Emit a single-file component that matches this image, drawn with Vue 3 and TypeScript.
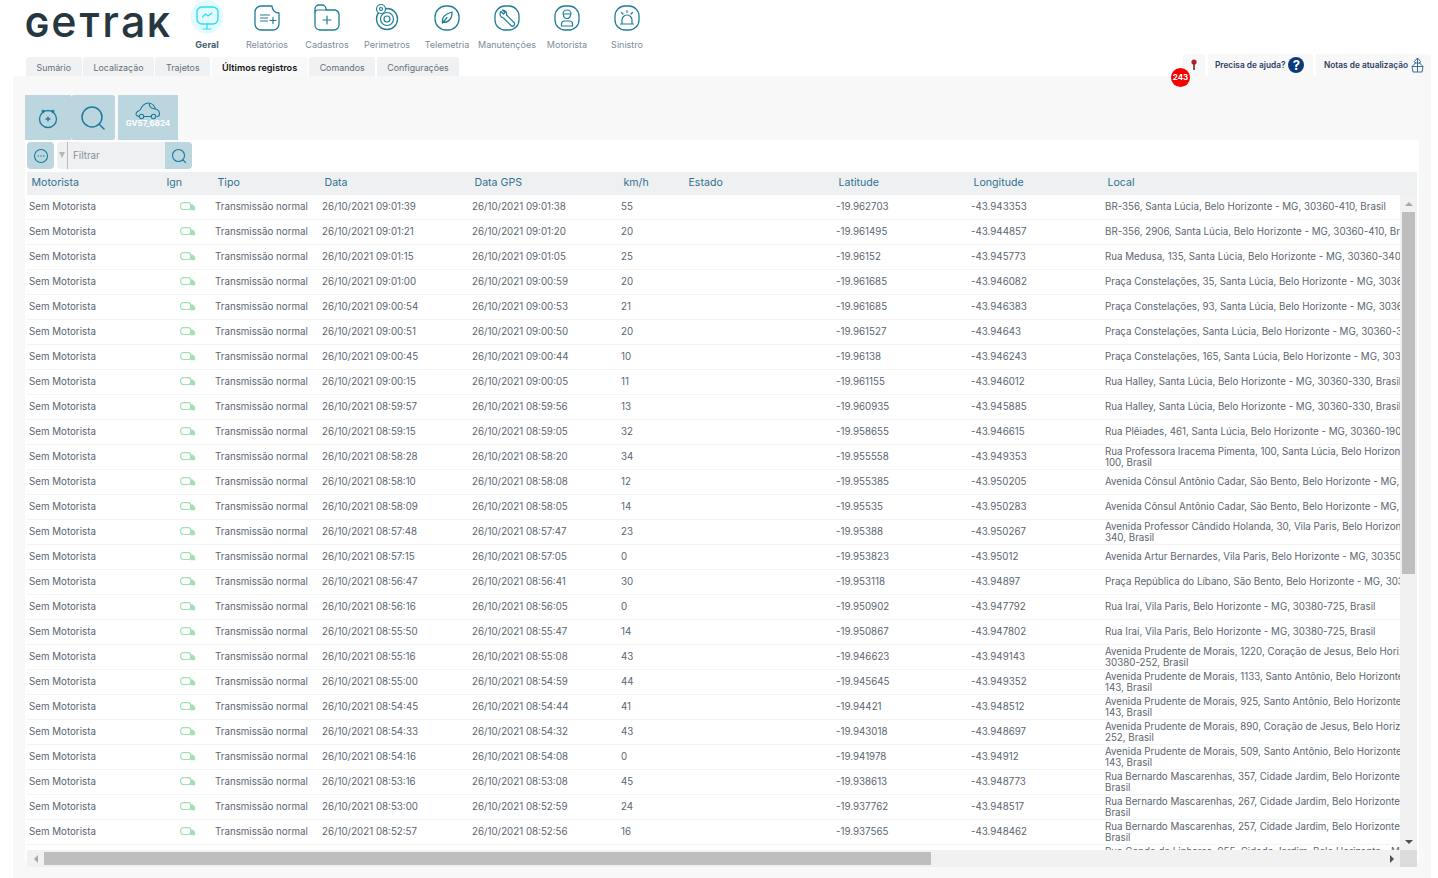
<script setup lang="ts">
import { ref } from "vue";

const navItems = ['Geral', 'Relatórios', 'Cadastros', 'Perimetros', 'Telemetria', 'Manutenções', 'Motorista', 'Sinistro']
const tabs = ['Sumário', 'Localização', 'Trajetos', 'Últimos registros', 'Comandos', 'Configurações']
const activeTab = ref('Últimos registros')
const columns = ['Motorista', 'Ign', 'Tipo', 'Data', 'Data GPS', 'km/h', 'Estado', 'Latitude', 'Longitude', 'Local']

const bh = 'Belo Horizonte - MG'
// a \n in the address is where the line breaks in the Local column
const raw: string[][] = [
    ['09:01:39', '09:01:38', '55', '-19.962703', '-43.943353', `BR-356, Santa Lúcia, ${bh}, 30360-410, Brasil`],
    ['09:01:21', '09:01:20', '20', '-19.961495', '-43.944857', `BR-356, 2906, Santa Lúcia, ${bh}, 30360-410, Brasil`],
    ['09:01:15', '09:01:05', '25', '-19.96152', '-43.945773', `Rua Medusa, 135, Santa Lúcia, ${bh}, 30360-340, Brasil`],
    ['09:01:00', '09:00:59', '20', '-19.961685', '-43.946082', `Praça Constelações, 35, Santa Lúcia, ${bh}, 30360-350, Brasil`],
    ['09:00:54', '09:00:53', '21', '-19.961685', '-43.946383', `Praça Constelações, 93, Santa Lúcia, ${bh}, 30360-350, Brasil`],
    ['09:00:51', '09:00:50', '20', '-19.961527', '-43.94643', `Praça Constelações, Santa Lúcia, ${bh}, 30360-350, Brasil`],
    ['09:00:45', '09:00:44', '10', '-19.96138', '-43.946243', `Praça Constelações, 165, Santa Lúcia, ${bh}, 30360-350, Brasil`],
    ['09:00:15', '09:00:05', '11', '-19.961155', '-43.946012', `Rua Halley, Santa Lúcia, ${bh}, 30360-330, Brasil`],
    ['08:59:57', '08:59:56', '13', '-19.960935', '-43.945885', `Rua Halley, Santa Lúcia, ${bh}, 30360-330, Brasil`],
    ['08:59:15', '08:59:05', '32', '-19.958655', '-43.946615', `Rua Plêiades, 461, Santa Lúcia, ${bh}, 30360-190, Brasil`],
    ['08:58:28', '08:58:20', '34', '-19.955558', '-43.949353', `Rua Professora Iracema Pimenta, 100, Santa Lúcia, ${bh}, 30360-\n100, Brasil`],
    ['08:58:10', '08:58:08', '12', '-19.955385', '-43.950205', `Avenida Cônsul Antônio Cadar, São Bento, ${bh}, 30360-220, Brasil`],
    ['08:58:09', '08:58:05', '14', '-19.95535', '-43.950283', `Avenida Cônsul Antônio Cadar, São Bento, ${bh}, 30360-220, Brasil`],
    ['08:57:48', '08:57:47', '23', '-19.95388', '-43.950267', `Avenida Professor Cândido Holanda, 30, Vila Paris, ${bh}, 30380-\n340, Brasil`],
    ['08:57:15', '08:57:05', '0', '-19.953823', '-43.95012', `Avenida Artur Bernardes, Vila Paris, ${bh}, 30350-000, Brasil`],
    ['08:56:47', '08:56:41', '30', '-19.953118', '-43.94897', `Praça República do Líbano, São Bento, ${bh}, 30350-000, Brasil`],
    ['08:56:16', '08:56:05', '0', '-19.950902', '-43.947792', `Rua Iraí, Vila Paris, ${bh}, 30380-725, Brasil`],
    ['08:55:50', '08:55:47', '14', '-19.950867', '-43.947802', `Rua Iraí, Vila Paris, ${bh}, 30380-725, Brasil`],
    ['08:55:16', '08:55:08', '43', '-19.946623', '-43.949143', `Avenida Prudente de Morais, 1220, Coração de Jesus, ${bh},\n30380-252, Brasil`],
    ['08:55:00', '08:54:59', '44', '-19.945645', '-43.949352', `Avenida Prudente de Morais, 1133, Santo Antônio, ${bh}, 30350-\n143, Brasil`],
    ['08:54:45', '08:54:44', '41', '-19.94421', '-43.948512', `Avenida Prudente de Morais, 925, Santo Antônio, ${bh}, 30350-\n143, Brasil`],
    ['08:54:33', '08:54:32', '43', '-19.943018', '-43.948697', `Avenida Prudente de Morais, 890, Coração de Jesus, ${bh}, 30380-\n252, Brasil`],
    ['08:54:16', '08:54:08', '0', '-19.941978', '-43.94912', `Avenida Prudente de Morais, 509, Santo Antônio, ${bh}, 30350-\n143, Brasil`],
    ['08:53:16', '08:53:08', '45', '-19.938613', '-43.948773', `Rua Bernardo Mascarenhas, 357, Cidade Jardim, ${bh}, 30380-010,\nBrasil`],
    ['08:53:00', '08:52:59', '24', '-19.937762', '-43.948517', `Rua Bernardo Mascarenhas, 267, Cidade Jardim, ${bh}, 30380-010,\nBrasil`],
    ['08:52:57', '08:52:56', '16', '-19.937565', '-43.948462', `Rua Bernardo Mascarenhas, 257, Cidade Jardim, ${bh}, 30380-010,\nBrasil`],
    ['08:52:40', '08:52:38', '18', '-19.936902', '-43.948120', `Rua Conde de Linhares, 955, Cidade Jardim, ${bh}, 30380-030,\nBrasil`],
]

const rows = raw.map((r) => ({
    data: '26/10/2021 ' + r[0],
    gps: '26/10/2021 ' + r[1],
    speed: r[2],
    lat: r[3],
    lng: r[4],
    local: r[5],
    twoLines: r[5].includes('\n'),
}))
</script>

<template>
    <div class="app">
        <header class="top">
            <div class="logo"><span class="cap">G</span><span class="low">e</span><span class="cap">T</span><span class="low">ra</span><span class="cap">K</span></div>
            <nav class="nav">
                <div v-for="(item, i) in navItems" :key="item" class="nav-item" :class="{ current: i === 0 }">
                    <svg class="nav-icon" viewBox="0 0 36 36" fill="none" stroke="#1f7d99" stroke-width="1.2" stroke-linecap="round" stroke-linejoin="round">
                        <template v-if="i === 0">
                            <circle cx="18" cy="17" r="16.5" fill="#e1fbff" stroke="none" />
                            <rect x="8" y="7" width="21" height="17" rx="5" stroke="#2fdcf2" stroke-width="1.4" />
                            <path d="M18 24v5M14 29h8M13.5 17l3-3 2.500 2 4-3" stroke="#2fdcf2" />
                        </template>
                        <template v-else-if="i === 1">
                            <path d="M23 6h-11a6 6 0 0 0-6 6v12a6 6 0 0 0 6 6h12a6 6 0 0 0 6-6v-11a7 7 0 0 1-7-7z" stroke-width="1.3" />
                            <path d="M11.500 15h9M11.500 18h7M11.500 21h7M24 17.500v6M21 20.500h6" />
                        </template>
                        <template v-else-if="i === 2">
                            <path d="M6 24v-15a4 4 0 0 1 4-4h3a4 4 0 0 1 4 4v1h9a5 5 0 0 1 4 5v10a5 5 0 0 1-5 5h-14a5 5 0 0 1-5-6z" stroke-width="1.3" />
                            <path d="M6 12a3 3 0 0 1 3-2h8M18 16v8M14 20h8" />
                        </template>
                        <template v-else-if="i === 3">
                            <circle cx="18" cy="19" r="10.500" stroke-width="1.3" />
                            <circle cx="18" cy="19" r="6.500" />
                            <circle cx="18" cy="19" r="3" />
                            <circle cx="12" cy="9" r="4.500" fill="#fff" />
                            <circle cx="12" cy="9" r="1.500" />
                        </template>
                        <template v-else-if="i === 4">
                            <rect x="6" y="6" width="24" height="24" rx="11" stroke-width="1.3" />
                            <path d="M13.500 23c-1-5 2.500-9 9.500-11 .5 6-3 10.500-9 10.500zM13.500 23l4.500-5.500" />
                        </template>
                        <template v-else-if="i === 5">
                            <rect x="6" y="6" width="24" height="24" rx="10" stroke-width="1.3" />
                            <path d="M12 11.500l2.500 2.500 1.500-1.500-2.500-2.500a4 4 0 0 1 4 5l7.500 7.500a2 2 0 0 1-3 3l-7.500-7.500a4 4 0 0 1-2.500-6.500z" />
                        </template>
                        <template v-else-if="i === 6">
                            <rect x="6" y="6" width="24" height="24" rx="10" stroke-width="1.3" />
                            <path d="M14 14a4 4 0 0 1 8 0zM14.500 15a3.500 3.500 0 0 0 7 0M12.500 26v-2a3 3 0 0 1 3-3h5a3 3 0 0 1 3 3v2z" />
                        </template>
                        <template v-else>
                            <rect x="6" y="6" width="24" height="24" rx="10" stroke-width="1.3" />
                            <path d="M13 24v-4a5 5 0 0 1 10 0v4zM11.500 24h13M18 10.500v2M12.500 12.500l1.500 1.500M23.500 12.500l-1.500 1.500" />
                        </template>
                    </svg>
                    <span class="nav-label">{{ item }}</span>
                </div>
            </nav>
        </header>

        <div class="tabbar">
            <div class="tabs">
                <div v-for="tab in tabs" :key="tab" class="tab" :class="{ active: tab === activeTab }">{{ tab }}</div>
            </div>
            <div class="help">
                <div class="help-box pin">
                    <svg width="8" height="12" viewBox="0 0 8 12"><circle cx="4" cy="3" r="2.600" fill="#b3202a" /><path d="M4 4v7" stroke="#6a2a2a" stroke-width="1.600" /></svg>
                    <span class="badge">243</span>
                </div>
                <div class="help-box ajuda">
                    <span>Precisa de ajuda?</span>
                    <span class="question">?</span>
                </div>
                <div class="help-box notas">
                    <span>Notas de atualização</span>
                    <svg width="13" height="16" viewBox="0 0 13 16" fill="none" stroke="#2d5c93" stroke-width="0.900" stroke-linejoin="round">
                        <path d="M6.500 1l3 3.500-1 1.500 3.500 3.500-1 5.500h-9l-1-5.500 3.500-3.500-1-1.500zM6.500 1v14M1 9.500h11M3.500 6h6" />
                    </svg>
                </div>
            </div>
        </div>

        <main class="panel">
            <div class="toolbar">
                <button class="tool first">
                    <svg width="24" height="24" viewBox="0 0 24 24" fill="none" stroke="#1b7c99" stroke-width="1.300" stroke-linecap="round">
                        <circle cx="12" cy="13" r="8.500" />
                        <path d="M6 5l1.500 1.500M18 5l-1.500 1.500M7 4.500h1M16 4.500h1M12 11v4M10 13h4" />
                    </svg>
                </button>
                <button class="tool second">
                    <svg width="28" height="28" viewBox="0 0 28 28" fill="none" stroke="#1b7c99" stroke-width="1.500" stroke-linecap="round">
                        <circle cx="13" cy="13" r="10" />
                        <path d="M20.500 20.500l4.500 4.500" />
                    </svg>
                </button>
                <button class="tool car">
                    <svg width="26" height="20" viewBox="0 0 26 20" fill="none" stroke="#1b7c99" stroke-width="1.100" stroke-linecap="round" stroke-linejoin="round">
                        <path d="M4 15.500c-3 0-3.500-2.500-2.500-4 1-1.500 3-1.500 4-3 1-3 4-6.500 8-6.500 3 0 6 2.500 7 6 2 .5 4 2 4 5 0 1.500-1 2.500-2.500 2.500M8.500 15.500h8" />
                        <circle cx="6.500" cy="15.500" r="2.200" />
                        <circle cx="18.500" cy="15.500" r="2.200" />
                        <path d="M14.500 2.500c-.5 2 .5 3.500 2 4.500l3.500 1" />
                    </svg>
                    <span>GV57_6824</span>
                </button>
            </div>

            <section class="card">
                <div class="filters">
                    <button class="more">
                        <svg width="16" height="16" viewBox="0 0 16 16" fill="none" stroke="#1b7c99" stroke-width="1.100">
                            <circle cx="8" cy="8" r="6.500" />
                            <path d="M5.200 8h.1M8 8h.1M10.800 8h.1" stroke-linecap="round" stroke-width="1.300" />
                        </svg>
                    </button>
                    <div class="filter">
                        <span class="caret"></span>
                        <span class="filter-text">Filtrar</span>
                        <button class="filter-go">
                            <svg width="16" height="16" viewBox="0 0 16 16" fill="none" stroke="#1b7c99" stroke-width="1.100" stroke-linecap="round">
                                <circle cx="7.500" cy="7.500" r="6" />
                                <path d="M12 12l2.500 2.500" />
                            </svg>
                        </button>
                    </div>
                </div>

                <div class="head grid">
                    <div v-for="col in columns" :key="col" class="head-cell">{{ col }}</div>
                </div>

                <div class="body">
                    <div class="viewport">
                        <div v-for="(row, i) in rows" :key="i" class="row grid">
                            <div class="cell">Sem Motorista</div>
                            <div class="ign">
                                <svg width="16" height="9" viewBox="0 0 16 9" fill="none" stroke="#a4dfb4" stroke-width="1.200">
                                    <rect x="0.700" y="0.700" width="10" height="6.800" rx="2.500" />
                                    <path d="M11 3h1.500l2 2.200v2.500h-3.500z" fill="#a4dfb4" />
                                </svg>
                            </div>
                            <div class="cell">Transmissão normal</div>
                            <div class="cell">{{ row.data }}</div>
                            <div class="cell">{{ row.gps }}</div>
                            <div class="cell">{{ row.speed }}</div>
                            <div class="cell"></div>
                            <div class="cell">{{ row.lat }}</div>
                            <div class="cell">{{ row.lng }}</div>
                            <div class="cell local" :class="{ wrapped: row.twoLines }">{{ row.local }}</div>
                        </div>
                    </div>
                    <div class="vbar">
                        <span class="sb-btn"><i class="arrow up"></i></span>
                        <span class="vthumb"></span>
                        <span class="sb-btn end"><i class="arrow down"></i></span>
                    </div>
                </div>

                <div class="hbar">
                    <span class="sb-btn"><i class="arrow left"></i></span>
                    <span class="hthumb"></span>
                    <span class="sb-btn end"><i class="arrow right"></i></span>
                    <span class="corner"></span>
                </div>
            </section>
        </main>
    </div>
</template>

<style scoped>
.app {
    height: 878px;
    overflow: hidden;
    display: flex;
    flex-direction: column;
    font-family: Inter, "Liberation Sans", sans-serif;
    background: #fff;
    color: #5b6570;
}
button {
    border: none;
    padding: 0;
    font-family: inherit;
    cursor: pointer;
}

/* top */
.top {
    height: 54px;
    flex: none;
    display: flex;
    padding-left: 25px;
}
.logo {
    width: 152px;
    flex: none;
    height: 40px;
    line-height: 43px;
    letter-spacing: 2.200px;
    color: #26373f;
    white-space: nowrap;
}
.cap {
    font-size: 32px;
    font-weight: 700;
}
.low {
    font-size: 43px;
    font-weight: 500;
}
.nav {
    display: flex;
}
.nav-item {
    width: 60px;
    display: flex;
    flex-direction: column;
    align-items: center;
}
.nav-icon {
    width: 36px;
    height: 36px;
    flex: none;
}
.nav-label {
    margin-top: 3px;
    font-size: 9px;
    line-height: 12px;
    color: #7d8b97;
    white-space: nowrap;
}
.current .nav-label {
    font-weight: 700;
    color: #47606f;
}

/* tabs */
.tabbar {
    height: 22px;
    flex: none;
    display: flex;
    justify-content: space-between;
    align-items: flex-end;
    padding: 0 7px 0 26px;
}
.tabs {
    display: flex;
    gap: 1.500px;
}
.tab {
    height: 19px;
    line-height: 21px;
    padding: 0 10.500px;
    font-size: 8.850px;
    background: #f0f1f3;
    border-radius: 3px 3px 0 0;
    color: #666f78;
}
.tab.active {
    background: #f9f9f9;
    color: #111;
    font-size: 9.150px;
    font-weight: 600;
}
.help {
    display: flex;
    gap: 3px;
    height: 22px;
}
.help-box {
    background: #f8f8f8;
    display: flex;
    align-items: center;
    font-size: 8.300px;
    font-weight: 600;
    color: #2e3f63;
}
.pin {
    width: 22px;
    justify-content: center;
    position: relative;
}
.badge {
    position: absolute;
    left: -12px;
    top: 13.500px;
    width: 19px;
    height: 19px;
    border-radius: 50%;
    background: #f60000;
    color: #fff;
    font-size: 8px;
    font-weight: 700;
    line-height: 19px;
    text-align: center;
}
.ajuda {
    width: 105px;
    padding-left: 7px;
    gap: 3px;
    box-sizing: border-box;
}
.question {
    width: 16px;
    height: 16px;
    border-radius: 50%;
    background: #0b3a78;
    color: #fff;
    font-size: 13px;
    font-weight: 700;
    line-height: 16px;
    text-align: center;
}
.notas {
    width: 115px;
    padding-left: 8px;
    gap: 3px;
    box-sizing: border-box;
}

/* panel */
.panel {
    flex: 1;
    margin: 0 7px 0 13px;
    padding: 19px 12px 0;
    background: #f8f8f8;
    min-height: 0;
}
.toolbar {
    display: flex;
    height: 45px;
}
.tool {
    background: #bcd6df;
    display: flex;
    flex-direction: column;
    align-items: center;
    justify-content: center;
}
.first {
    width: 46px;
}
.second {
    width: 44px;
    margin-right: 3px;
    border-radius: 3px;
}
.car {
    width: 60px;
    justify-content: flex-start;
    padding-top: 6px;
}
.car span {
    margin-top: -3px;
    font-size: 8px;
    line-height: 10px;
    font-weight: 700;
    color: #fff;
}

.card {
    background: #fff;
    height: 721px;
    padding: 2px 2px 0;
    box-sizing: border-box;
}
.filters {
    display: flex;
    gap: 3px;
    height: 27px;
}
.more {
    width: 27px;
    background: #bcd6df;
    border-radius: 4px;
    display: flex;
    align-items: center;
    justify-content: center;
}
.filter {
    width: 135px;
    background: #eff0f2;
    border-radius: 4px;
    display: flex;
    align-items: center;
    overflow: hidden;
}
.caret {
    width: 11px;
    height: 27px;
    box-sizing: border-box;
    border-right: 1px solid #bbb;
    position: relative;
}
.caret::before {
    content: "";
    position: absolute;
    left: 2px;
    top: 10px;
    border-left: 3px solid transparent;
    border-right: 3px solid transparent;
    border-top: 6px solid #b5b5b5;
}
.filter-text {
    flex: 1;
    padding: 0 0 1px 5px;
    font-size: 9.800px;
    color: #8a8f96;
}
.filter-go {
    width: 27px;
    height: 27px;
    background: #bcd6df;
    display: flex;
    align-items: center;
    justify-content: center;
}

/* table */
.grid {
    display: grid;
    grid-template-columns: 137px 49px 107px 150px 149px 65px 150px 135px 134px 420px;
}
.head {
    margin-top: 3px;
    height: 23px;
    padding-bottom: 3px;
    box-sizing: border-box;
    background: #eff0f2;
    align-items: center;
    overflow: hidden;
}
.head-cell {
    padding-left: 4.500px;
    font-size: 10.600px;
    color: #2f7191;
}
.head-cell:nth-child(2) {
    padding-left: 2.500px;
}
.body {
    display: flex;
    height: 655px;
}
.viewport {
    width: 1373px;
    overflow: hidden;
}
.row {
    height: 25px;
    box-sizing: border-box;
    border-bottom: 1px solid #f4f4f4;
    align-items: center;
}
.cell {
    padding-left: 2px;
    margin-bottom: 2px;
    font-size: 9.750px;
    line-height: 11px;
    color: #5b6570;
}
.local {
    white-space: pre-line;
}
.local.wrapped {
    margin-bottom: 0;
}
.ign {
    padding-left: 16px;
    height: 9px;
    margin-bottom: 2px;
}
.ign svg {
    display: block;
}

/* scrollbars */
.vbar {
    width: 17px;
    background: #f1f1f1;
    display: flex;
    flex-direction: column;
}
.vthumb {
    height: 362px;
    margin: 0 2px;
    background: #bebebe;
}
.hbar {
    height: 17px;
    background: #f1f1f1;
    display: flex;
    margin-bottom: -6px;
}
.hthumb {
    width: 887px;
    margin: 2px 0;
    background: #bebebe;
}
.sb-btn {
    width: 17px;
    height: 17px;
    flex: none;
    display: flex;
    align-items: center;
    justify-content: center;
}
.sb-btn.end {
    margin-top: auto;
    margin-left: auto;
}
.corner {
    width: 17px;
    background: #dcdcdc;
}
.arrow {
    width: 0;
    height: 0;
    border: 4px solid transparent;
}
.up {
    border-top: 0;
    border-bottom-color: #a8a8a8;
}
.down {
    border-bottom: 0;
    border-top-color: #505050;
}
.left {
    border-left: 0;
    border-right-color: #a8a8a8;
}
.right {
    border-right: 0;
    border-left-color: #505050;
}
</style>
